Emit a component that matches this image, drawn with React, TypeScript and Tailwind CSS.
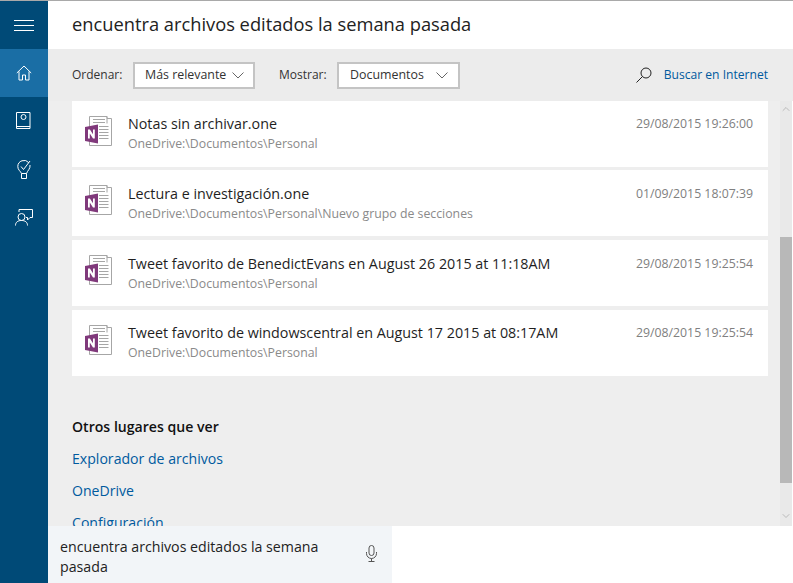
import { ChevronDown, ChevronUp } from "lucide-react";

const font = "font-['Open_Sans','Noto_Sans',sans-serif]";

const results = [
  {
    title: "Notas sin archivar.one",
    path: "OneDrive:\\Documentos\\Personal",
    date: "29/08/2015 19:26:00",
  },
  {
    title: "Lectura e investigación.one",
    path: "OneDrive:\\Documentos\\Personal\\Nuevo grupo de secciones",
    date: "01/09/2015 18:07:39",
  },
  {
    title: "Tweet favorito de BenedictEvans en August 26 2015 at 11:18AM",
    path: "OneDrive:\\Documentos\\Personal",
    date: "29/08/2015 19:25:54",
  },
  {
    title: "Tweet favorito de windowscentral en August 17 2015 at 08:17AM",
    path: "OneDrive:\\Documentos\\Personal",
    date: "29/08/2015 19:25:54",
  },
];

const OneNoteIcon = () => (
  <svg width="27" height="30" viewBox="0 0 27 30" fill="none">
    <path d="M4.500.5H22V2.500H26.500V29.500H4.500Z" fill="#fff" stroke="#a6a6a6" />
    <path d="M22 .5V7.500" stroke="#a6a6a6" />
    <path d="M8 3.500H20M8 6.500H20M14 10.500H23.500M14 13.500H23.500M14 16.500H23.500M14 19.500H23.500M14 22.500H23.500" stroke="#a6a6a6" />
    <path d="M0 11L13 8.500V27.500L0 25Z" fill="#80397b" />
    <path d="M3 22.500V13.500H4.900L8 18.300V13.500H9.800V22.500H8L4.800 17.500V22.500Z" fill="#fff" />
  </svg>
);

const NavItem = ({ active, children }: { active?: boolean; children: React.ReactNode }) => (
  <div className={`flex h-12 w-12 items-center justify-center ${active ? "bg-[#1a6ea5]" : ""}`}>{children}</div>
);

const Sidebar = () => (
  <div className="flex w-12 shrink-0 flex-col bg-[#004a77] text-white">
    <div className="flex h-12 w-12 items-center justify-center">
      <svg width="20" height="11" viewBox="0 0 20 11" stroke="#fff" strokeWidth="1">
        <path d="M0 .5H20M0 5.500H20M0 10.500H20" />
      </svg>
    </div>
    <NavItem active>
      <svg width="16" height="16" viewBox="0 0 16 16" fill="none" stroke="#fff" strokeWidth="1">
        <path d="M.8 8 8 1l7.200 7M3 6.500V15h3.500v-5h3v5H13V6.500" />
      </svg>
    </NavItem>
    <NavItem>
      <svg width="16" height="18" viewBox="0 0 16 18" fill="none" stroke="#fff" strokeWidth="1">
        <path d="M.5.5h13.500v16H.5ZM.5 14.500h13.500" />
        <circle cx="7.500" cy="5" r="2.500" />
      </svg>
    </NavItem>
    <NavItem>
      <svg width="14" height="19" viewBox="0 0 14 19" fill="none" stroke="#fff" strokeWidth="1">
        <path d="M4.500 13.500C3.500 11 .8 10 .8 6.500a6.200 6.200 0 0 1 11-3.800M13 5c.6 3.800-2.500 5.500-3.500 8.500h-5M4.500 13.500v5h5v-5" />
        <path d="m4 6.500 2.500 3L13 1" />
      </svg>
    </NavItem>
    <NavItem>
      <svg width="18" height="17" viewBox="0 0 18 17" fill="none" stroke="#fff" strokeWidth="1">
        <path d="M4 3V.5h13.500v8H15L12.500 11V8.500H11" />
        <circle cx="6.500" cy="8" r="3.500" />
        <path d="M.5 16.500c0-3.500 2.500-5 6-5s6 1.500 6 5" />
      </svg>
    </NavItem>
  </div>
);

const Select = ({ label, width, pad, gap }: { label: string; width: string; pad: string; gap: string }) => (
  <div className={`flex h-[27px] items-center border-2 border-[#c4c4c4] bg-white text-[12.4px] text-[#333] ${pad} ${width}`}>
    <span>{label}</span>
    <svg className={gap} width="12" height="7" viewBox="0 0 12 7" fill="none" stroke="#666" strokeWidth="1">
      <path d="M.5.5 6 6 11.500.5" />
    </svg>
  </div>
);

type RowProps = { title: string; path: string; date: string; index: number };

const ResultRow = ({ title, path, date, index }: RowProps) => {
  // the middle rows sit a pixel lower inside their card
  const shifted = index === 1 || index === 2;
  return (
    <div className={`flex h-[66px] items-start bg-white pl-[13px] ${index === 0 ? "-mb-px" : ""}`}>
      <div className="mt-[15px] w-[43px] shrink-0">
        <OneNoteIcon />
      </div>
      <div className={`flex-1 ${shifted ? "pt-[14px]" : "pt-[13px]"}`}>
        <div className="text-[14.3px] leading-[20px] text-[#1f1f1f]">{title}</div>
        <div className="text-[12.3px] leading-[19px] text-[#8a8a8a]">{path}</div>
      </div>
      <div className={`pr-[15px] text-[12.3px] leading-[18px] text-[#808080] ${shifted ? "pt-[15px]" : "pt-[14px]"}`}>
        {date}
      </div>
    </div>
  );
};

const Scrollbar = () => (
  <div className="flex w-3 flex-col bg-[#e9e9e9]">
    <div className="flex h-[136px] shrink-0 justify-center pt-0.5">
      <ChevronUp className="h-3 w-3 text-[#aaa]" strokeWidth={1.5} />
    </div>
    <div className="h-[246px] shrink-0 bg-[#b8b8b8]" />
    <div className="flex flex-1 items-end justify-center pb-1">
      <ChevronDown className="h-3 w-3 text-[#aaa]" strokeWidth={1.5} />
    </div>
  </div>
);

export default function App() {
  return (
    <div className={`flex h-[583px] w-[793px] flex-col overflow-hidden border-t border-[#a9a9a9] bg-white ${font}`}>
      <div className="flex min-h-0 flex-1">
        <Sidebar />
        <div className="flex min-w-0 flex-1 flex-col">
          {/* Query */}
          <div className="flex h-12 shrink-0 items-center bg-white pb-0.5 pl-6 text-[18.3px] text-[#222]">
            encuentra archivos editados la semana pasada
          </div>

          {/* Filters */}
          <div className="flex h-[52px] shrink-0 items-center bg-[#ececec] pl-6 pr-[25px] text-[12px] text-[#333]">
            <span className="w-[50px]">Ordenar:</span>
            <div className="ml-[11px]">
              <Select label="Más relevante" width="w-[122px]" pad="pl-[10px]" gap="ml-[6px]" />
            </div>
            <span className="ml-[24px] w-[52px]">Mostrar:</span>
            <div className="ml-[6px]">
              <Select label="Documentos" width="w-[123px]" pad="pl-[11px]" gap="ml-[12px]" />
            </div>
            <div className="ml-auto flex items-center gap-[12px] text-[12.100px] text-[#005a9e]">
              <svg width="16" height="16" viewBox="0 0 16 16" fill="none" stroke="#222" strokeWidth="1">
                <circle cx="10" cy="6" r="5" />
                <path d="M6.500 9.500.5 15.500" />
              </svg>
              <span>Buscar en Internet</span>
            </div>
          </div>

          {/* Results */}
          <div className="flex min-h-0 flex-1 bg-[#eeeeee]">
            <div className="min-w-0 flex-1 overflow-hidden pl-6 pr-3">
              <div className="flex flex-col gap-1">
                {results.map((r, i) => (
                  <ResultRow key={r.title} index={i} {...r} />
                ))}
              </div>
              <div className="pt-[41px] text-[14.100px] font-semibold leading-5 text-[#111]">Otros lugares que ver</div>
              <div className="flex flex-col gap-3 pt-[12px] text-[14.100px] leading-5 text-[#005a9e]">
                <span>Explorador de archivos</span>
                <span>OneDrive</span>
                <span>Configuración</span>
              </div>
            </div>
            <Scrollbar />
            <div className="w-px bg-white" />
          </div>
        </div>
      </div>

      {/* Search box */}
      <div className="flex h-[57px] shrink-0 bg-white">
        <div className="w-12 bg-[#004a77]" />
        <div className="flex w-[344px] items-center bg-[#f2f5f8] pl-3 pr-[15px]">
          <div className="w-[270px] pt-1 text-[14.200px] leading-5 text-[#222]">
            encuentra archivos editados la semana pasada
          </div>
          <svg className="mb-[2px] ml-auto" width="11" height="17" viewBox="0 0 11 17" fill="none" stroke="#555" strokeWidth="1">
            <rect x="3" y=".5" width="5" height="10" rx="2.500" />
            <path d="M.5 7v1.500a5 5 0 0 0 10 0V7M5.500 13.500v3M2.500 16.500h6" />
          </svg>
        </div>
      </div>
    </div>
  );
}
